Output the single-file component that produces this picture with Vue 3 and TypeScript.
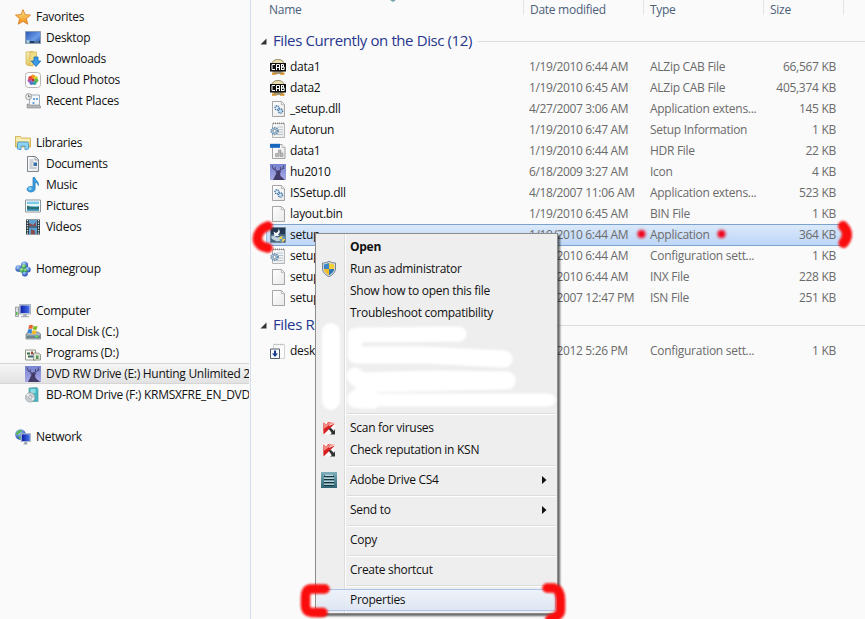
<script setup lang="ts">
interface NavItem { label: string; icon: string; child?: boolean; active?: boolean; gap?: boolean }
interface FileRow { name: string; icon: string; date: string; type: string; size: string; selected?: boolean }
interface MenuItem { label?: string; icon?: string; kind?: 'sep' | 'blank'; bold?: boolean; arrow?: boolean; hover?: boolean }

const nav: NavItem[] = [
  { label: 'Favorites', icon: 'star' },
  { label: 'Desktop', icon: 'desktop', child: true },
  { label: 'Downloads', icon: 'downloads', child: true },
  { label: 'iCloud Photos', icon: 'photos', child: true },
  { label: 'Recent Places', icon: 'recent', child: true },
  { label: 'Libraries', icon: 'libraries', gap: true },
  { label: 'Documents', icon: 'document', child: true },
  { label: 'Music', icon: 'music', child: true },
  { label: 'Pictures', icon: 'picture', child: true },
  { label: 'Videos', icon: 'video', child: true },
  { label: 'Homegroup', icon: 'homegroup', gap: true },
  { label: 'Computer', icon: 'computer', gap: true },
  { label: 'Local Disk (C:)', icon: 'disk', child: true },
  { label: 'Programs (D:)', icon: 'programs', child: true },
  { label: 'DVD RW Drive (E:) Hunting Unlimited 2', icon: 'deer', child: true, active: true },
  { label: 'BD-ROM Drive (F:) KRMSXFRE_EN_DVD', icon: 'bdrom', child: true },
  { label: 'Network', icon: 'network', gap: true },
]

const discFiles: FileRow[] = [
  { name: 'data1', icon: 'cab', date: '1/19/2010 6:44 AM', type: 'ALZip CAB File', size: '66,567 KB' },
  { name: 'data2', icon: 'cab', date: '1/19/2010 6:45 AM', type: 'ALZip CAB File', size: '405,374 KB' },
  { name: '_setup.dll', icon: 'dll', date: '4/27/2007 3:06 AM', type: 'Application extens...', size: '145 KB' },
  { name: 'Autorun', icon: 'config', date: '1/19/2010 6:47 AM', type: 'Setup Information', size: '1 KB' },
  { name: 'data1', icon: 'hdr', date: '1/19/2010 6:44 AM', type: 'HDR File', size: '22 KB' },
  { name: 'hu2010', icon: 'deer', date: '6/18/2009 3:27 AM', type: 'Icon', size: '4 KB' },
  { name: 'ISSetup.dll', icon: 'dll', date: '4/18/2007 11:06 AM', type: 'Application extens...', size: '523 KB' },
  { name: 'layout.bin', icon: 'page', date: '1/19/2010 6:45 AM', type: 'BIN File', size: '1 KB' },
  { name: 'setup', icon: 'setup', date: '1/19/2010 6:44 AM', type: 'Application', size: '364 KB', selected: true },
  { name: 'setup', icon: 'config', date: '1/19/2010 6:44 AM', type: 'Configuration sett...', size: '1 KB' },
  { name: 'setup', icon: 'page', date: '1/19/2010 6:44 AM', type: 'INX File', size: '228 KB' },
  { name: 'setup', icon: 'page', date: '4/18/2007 12:47 PM', type: 'ISN File', size: '251 KB' },
]
const burnFiles: FileRow[] = [
  { name: 'desktop', icon: 'queued', date: '6/20/2012 5:26 PM', type: 'Configuration sett...', size: '1 KB' },
]
const groups = [
  { title: 'Files Currently on the Disc (12)', rows: discFiles },
  { title: 'Files R', rows: burnFiles },
]

const menu: MenuItem[] = [
  { label: 'Open', bold: true },
  { label: 'Run as administrator', icon: 'shield' },
  { label: 'Show how to open this file' },
  { label: 'Troubleshoot compatibility' },
  { kind: 'blank' },
  { kind: 'sep' },
  { label: 'Scan for viruses', icon: 'kav' },
  { label: 'Check reputation in KSN', icon: 'kav' },
  { kind: 'sep' },
  { label: 'Adobe Drive CS4', icon: 'adobe', arrow: true },
  { kind: 'sep' },
  { label: 'Send to', arrow: true },
  { kind: 'sep' },
  { label: 'Copy' },
  { kind: 'sep' },
  { label: 'Create shortcut' },
  { kind: 'sep' },
  { label: 'Properties', hover: true },
]
</script>

<template>
  <div class="window">
    <svg class="defs" width="0" height="0">
      <defs>
        <linearGradient id="gStar" x1="0" y1="0" x2="0" y2="1"><stop offset="0" stop-color="#ffe98a" /><stop offset="1" stop-color="#f28a12" /></linearGradient>
        <linearGradient id="gBlue" x1="0" y1="0" x2="1" y2="1"><stop offset="0" stop-color="#2a55b4" /><stop offset=".6" stop-color="#6a9ce8" /><stop offset="1" stop-color="#2450a8" /></linearGradient>
        <linearGradient id="gScreen" x1="0" y1="0" x2="1" y2="0"><stop offset="0" stop-color="#0a1fa8" /><stop offset="1" stop-color="#4a74ea" /></linearGradient>
        <linearGradient id="gFold" x1="0" y1="0" x2="0" y2="1"><stop offset="0" stop-color="#f8eeb0" /><stop offset="1" stop-color="#e3c863" /></linearGradient>
        <linearGradient id="gPage" x1="0" y1="0" x2="1" y2="1"><stop offset="0" stop-color="#ffffff" /><stop offset="1" stop-color="#e9e9e9" /></linearGradient>
        <linearGradient id="gDeer" x1="0" y1="0" x2="0" y2="1"><stop offset="0" stop-color="#7684d2" /><stop offset="1" stop-color="#a9a8e4" /></linearGradient>
        <linearGradient id="gAdobe" x1="0" y1="0" x2="0" y2="1"><stop offset="0" stop-color="#7fb0bc" /><stop offset="1" stop-color="#2e6475" /></linearGradient>
        <radialGradient id="gBall" cx=".4" cy=".3" r=".7"><stop offset="0" stop-color="#a9d4ff" /><stop offset="1" stop-color="#1e44b0" /></radialGradient>
        <radialGradient id="gGreen" cx=".4" cy=".3" r=".7"><stop offset="0" stop-color="#b4f0a0" /><stop offset="1" stop-color="#1f8a36" /></radialGradient>
        <filter id="soft" x="-20%" y="-20%" width="140%" height="140%"><feGaussianBlur stdDeviation=".9" /></filter>
        <filter id="softer" x="-60%" y="-60%" width="220%" height="220%"><feGaussianBlur stdDeviation="1.400" /></filter>
      </defs>
      <symbol id="star" viewBox="0 0 16 16"><path d="M8 .6l2.100 5 5.400.5-4.100 3.600 1.300 5.500L8 12.300l-4.700 2.900 1.300-5.500L.5 6.100l5.400-.5z" fill="url(#gStar)" stroke="#d9822b" stroke-width=".9" /></symbol>
      <symbol id="desktop" viewBox="0 0 16 16"><path d="M.5 1.500h15v12H.5z" fill="url(#gBlue)" stroke="#8b9cb5" /><path d="M1 11h14v2H1z" fill="#1f3c60" /><circle cx="3" cy="11.700" r="1.800" fill="#a7cfd8" /><path d="M9 12h5" stroke="#7fa0c8" /></symbol>
      <symbol id="downloads" viewBox="0 0 16 16"><path d="M1 1l7-.5V15l-6-.8L1 13z" fill="url(#gFold)" stroke="#d0b050" stroke-width=".7" /><path d="M5 1h6.500v11L5 15z" fill="#f1dd84" stroke="#d0b050" stroke-width=".7" /><path d="M9 6h4v4h2.800L11 15.500 6.200 10H9z" fill="#3b9be6" stroke="#1569ad" stroke-width=".8" /></symbol>
      <symbol id="photos" viewBox="0 0 16 16"><rect x=".5" y=".5" width="15" height="15" rx="3" fill="#fff" stroke="#b9b4b4" /><circle cx="8" cy="4.600" r="2.200" fill="#f59a22" /><circle cx="10.700" cy="6" r="2.100" fill="#d5cf28" /><circle cx="11.300" cy="8.600" r="2.100" fill="#62b94a" /><circle cx="9.500" cy="11" r="2.100" fill="#38a59b" /><circle cx="6.500" cy="11" r="2.100" fill="#5474cd" /><circle cx="4.700" cy="8.600" r="2.100" fill="#a45ab6" /><circle cx="5.300" cy="6" r="2.100" fill="#e8453c" /><circle cx="8" cy="8" r="1.400" fill="#c4282e" /></symbol>
      <symbol id="recent" viewBox="0 0 16 16"><path d="M5 2h9.500v11H4z" fill="#f5f9fc" stroke="#8b98a4" stroke-width=".8" /><path d="M8 5h2v2H8zM11 5h2v2h-2zM7.500 9h2v2h-2z" fill="#6ea6d8" /><path d="M2 11l3.500 1h9l1 1.500V15H2z" fill="#b3b6b8" stroke="#888" stroke-width=".6" /><circle cx="3.600" cy="3.600" r="3" fill="#eee" stroke="#8a8a8a" stroke-width=".8" /><path d="M3.500 1.800v2h2" fill="none" stroke="#555" stroke-width=".8" /></symbol>
      <symbol id="libraries" viewBox="0 0 16 16"><path d="M.5 1.500h5l1 1.500h9V12H.5z" fill="url(#gFold)" stroke="#c9a944" stroke-width=".8" /><path d="M1 5h14" stroke="#fffbd8" /><path d="M2.500 14V8.500Q2.500 7 4 7h8q1.500 0 1.500 1.500V14l-3.500.8V11H6v3.800z" fill="#8fd2f3" stroke="#4193c4" stroke-width=".8" /></symbol>
      <symbol id="document" viewBox="0 0 16 16"><path d="M2.500.5h8l3 3v12h-11z" fill="url(#gPage)" stroke="#7d8790" /><path d="M10 .5v3.500h3.500" fill="#dfe5ea" stroke="#7d8790" stroke-width=".7" /><path d="M4.500 4h4M4.500 6h4M4.500 8h3M4.500 10h3M4.500 12h7" stroke="#8f9aa5" stroke-width=".8" /><path d="M8.500 6.500h3.500v3.500H8.500z" fill="#356fa8" /></symbol>
      <symbol id="music" viewBox="0 0 16 16"><path d="M8 .5h1.800c.3 3 4.200 3.500 3.600 8-.6-2-1.600-3-3.300-3.200v6.500c0 4-8 4.300-8 .5 0-2.300 3.300-3.500 5.900-2.200z" fill="#3a9ee0" stroke="#1e77b8" stroke-width=".7" /><circle cx="5" cy="11.600" r="1.700" fill="#8ccff5" /></symbol>
      <symbol id="picture" viewBox="0 0 16 16"><path d="M.5 2h15v12H.5z" fill="#fff" stroke="#8b959e" /><path d="M2 3.500h12v9H2z" fill="#7cc9ea" /><path d="M2 6h12v2H2z" fill="#e2f5f4" /><path d="M2 7.500q5 2.500 12 1v4H2z" fill="#28716f" /><path d="M2 11h12v1.500H2z" fill="#398dbd" /></symbol>
      <symbol id="video" viewBox="0 0 16 16"><path d="M1 .5h14v15H1z" fill="#27383f" /><path d="M4 1h8v6.500H4zM4 8.500h8V15H4z" fill="#5fa0cf" /><path d="M4 4l4 2 3-3v4H4zM6 10l4 2v3H6z" fill="#8c4b4d" /><path d="M2.500 1v14M13.500 1v14" stroke="#e9f1f4" stroke-width="1.300" stroke-dasharray="1.300 1.200" /></symbol>
      <symbol id="homegroup" viewBox="0 0 16 16"><circle cx="3.600" cy="7.500" r="3.200" fill="url(#gBall)" /><circle cx="9.500" cy="4" r="3.600" fill="url(#gBall)" /><circle cx="12.800" cy="8.600" r="2.900" fill="url(#gBall)" /><circle cx="9.800" cy="12.500" r="3" fill="url(#gBall)" /><circle cx="9" cy="5.500" r="2.300" fill="url(#gGreen)" /><circle cx="6.800" cy="9.300" r="2.400" fill="url(#gGreen)" /><circle cx="10.500" cy="9.500" r="1.700" fill="url(#gGreen)" /></symbol>
      <symbol id="computer" viewBox="0 0 16 16"><path d="M.5 4h3v9.500h-3z" fill="#d7dde0" stroke="#8c9498" stroke-width=".8" /><path d="M1 9h1.500v3H1z" fill="#5dbb4c" /><path d="M4.500 1.500h11v9.500h-11z" fill="#d7dde8" stroke="#9aa4b2" stroke-width=".8" /><path d="M5.500 2.500h9v7.500h-9z" fill="url(#gScreen)" /><path d="M8.500 11h3l.5 2h2v1.200H6V13h2z" fill="#a9b1b8" /></symbol>
      <symbol id="disk" viewBox="0 0 16 16"><path d="M1 10l2.500-2h10l2 2v5H1z" fill="#aab7bd" stroke="#67757b" stroke-width=".7" /><path d="M1.500 11.500h13.500V14H1.500z" fill="#6c858f" /><path d="M10 12.500h3" stroke="#55e050" stroke-width="1.500" /><path d="M4 1.500q2-1.500 4 0L7.300 5q-2-1.200-4 0z" fill="#e9622b" /><path d="M8.600 1.700q2 1.200 4 .2L11.800 5.500q-2 1-4-.2z" fill="#84bb2c" /><path d="M3 5.700q2-1.200 4.100 0L6.300 9.300q-2-1.200-4 0z" fill="#3b84d8" /><path d="M7.600 6q2 1.200 4 .2L10.900 9.700q-2 1-4-.2z" fill="#f5bd25" /></symbol>
      <symbol id="programs" viewBox="0 0 16 16"><path d="M.5 5h10v10H.5z" fill="#f7f8f4" stroke="#92988c" /><path d="M2 7.500h3v2H2zM3 10.500h3v2H3z" fill="#3c6b44" /><path d="M6 6.500h2v3H6z" fill="#a44438" /><path d="M6 10.500h2v2H6z" fill="#34589b" /><path d="M8.500 8h4.500l2.500 1.500V15h-7z" fill="#dfe5d6" stroke="#7c8776" stroke-width=".8" /><path d="M11 10.500h2.500V14H11z" fill="#5b9558" /></symbol>
      <symbol id="deer" viewBox="0 0 16 16"><path d="M0 0h16v16H0z" fill="url(#gDeer)" /><path d="M3 16l2-4 1.500-3L5 7.500l2-.3L8.500 6l1 1.200 2 .2L10 9l.5 3 4.500 4z" fill="#433b68" /><path d="M7.500 6.800C4 6 2.500 4.500 2 1.500M4 5l-1.200-.2M5.500 5.700L5 3M9 6.800c3-.8 4.500-2.500 4.500-5.300M12.500 4.500l2-.5M10.500 5.800L10.300 3" fill="none" stroke="#413968" stroke-width=".9" /></symbol>
      <symbol id="bdrom" viewBox="0 0 16 16"><path d="M4 1l8-.5 1 1.500v12.500H5L4 13z" fill="#42b8c4" stroke="#5c98a2" stroke-width=".7" /><path d="M5.500 2h5v4h-5z" fill="#8fdce2" /><circle cx="5.200" cy="10.300" r="4.800" fill="#c8ced2" stroke="#8f999e" stroke-width=".6" /><path d="M5.200 10.300L2 7M5.200 10.300l3.800 2" stroke="#f6f8fa" stroke-width="1.500" /><circle cx="5.200" cy="10.300" r="1.500" fill="#fff" stroke="#8b9397" stroke-width=".8" /></symbol>
      <symbol id="network" viewBox="0 0 16 16"><circle cx="5.500" cy="5.500" r="5.300" fill="url(#gBall)" /><path d="M2 2.500Q5 0 7 1.500 6 4 3.500 4.500 2 7 1 5.500zM3.500 7q3 0 2.500 3.500Q3 9.500 3.500 7z" fill="#58b84e" /><path d="M6 4.500h9.500v8H6z" fill="#dbe2ec" stroke="#94a0b0" stroke-width=".7" /><path d="M6.800 5.300h8V12h-8z" fill="url(#gScreen)" /><path d="M9.500 13h2.500l.5 2.500h-4z" fill="#9aa7b4" /></symbol>
      <symbol id="cab" viewBox="0 0 16 16"><circle cx="8" cy="7.500" r="7.200" fill="#e9dcae" stroke="#847a59" stroke-width=".8" /><path d="M2 13.500h4.500v2.300H2zM10 13.500h4.500v2.300H10z" fill="#d99223" /><path d="M4 12h8v2.500H4z" fill="#a39573" /><path d="M0 4h16v8.500H0z" fill="#111" /><path d="M5 5.500H2v5h3M6.500 11V5.500h3V11M6.500 8.500h3M11.500 5v6M11 5.500h2.500V8H11M11 8h3.200v2.500H11" fill="none" stroke="#fff" stroke-width="1" /></symbol>
      <symbol id="page" viewBox="0 0 16 16"><path d="M2.500.5h9l3 3v12h-12z" fill="url(#gPage)" stroke="#9c9c9c" stroke-width=".9" /><path d="M11.300.7v3h3" fill="#f4f4f4" stroke="#ababab" stroke-width=".8" /></symbol>
      <symbol id="dll" viewBox="0 0 16 16"><use href="#page" /><circle cx="7" cy="6.800" r="2.100" fill="#d8e9f8" stroke="#3d6e9e" stroke-width="1.300" stroke-dasharray="1.200 .7" /><circle cx="10.500" cy="10" r="2.100" fill="#c6def4" stroke="#3d6e9e" stroke-width="1.300" stroke-dasharray="1.200 .7" /></symbol>
      <symbol id="config" viewBox="0 0 16 16"><path d="M2.500 1.500h12v14h-12z" fill="url(#gPage)" stroke="#a6a6a6" stroke-width=".8" /><path d="M3 1.300h11" stroke="#888" stroke-width="1.800" stroke-dasharray="1 1" /><path d="M7 5h6M7 7.500h6M7 10h6M7 12.500h6" stroke="#a9bac6" stroke-width=".8" /><circle cx="4.600" cy="9" r="3.300" fill="#cfe0ee" stroke="#6589a6" stroke-width="1.900" stroke-dasharray="1.300 .8" /><circle cx="4.600" cy="9" r="1.600" fill="#fff" stroke="#587b98" stroke-width=".8" /></symbol>
      <symbol id="hdr" viewBox="0 0 16 16"><path d="M2.500 1.500h9.500l3 3v11H2.500z" fill="url(#gPage)" stroke="#999" stroke-width=".9" /><path d="M12 1.500v3h3" fill="#fff" stroke="#aaa" stroke-width=".8" /><path d="M0 .8h10v4H0z" fill="#1768bd" /><path d="M5.500 10.500h3.500v3H5.500zM10 10h3v3.500h-3zM8.500 7h2.500v2.500H8.500z" fill="#b8b8b8" stroke="#868686" stroke-width=".5" /></symbol>
      <symbol id="setup" viewBox="0 0 16 16"><path d="M.5.500h15v15H.500z" fill="#46657f" stroke="#71879a" /><path d="M1 1h14v6H1z" fill="#233750" /><path d="M1 9.500l3-1 3 2 5-1 2 1-2 3-5 1-5-2.500z" fill="#bfd2dd" /><path d="M3.500 4.500l1 4.500h5L7.800 7.700Q11.500 5.500 8.500 1.500 9 4.500 6 6z" fill="#f4fafb" /><path d="M9.500 10l2.700-1.300L15 10v2.500q-.8 2-2.800 3-2-1-2.700-3z" fill="#f3d04e" /><path d="M12.200 8.700L15 10v2h-2.800zM9.500 12h2.700v3.500Q10 14.500 9.500 12z" fill="#5b95c0" /></symbol>
      <symbol id="queued" viewBox="0 0 16 16"><path d="M3.500 1.500h11v14h-11z" fill="#fbfbfb" stroke="#c9c9c9" stroke-width=".8" /><path d="M4 1.500h10" stroke="#bbb" stroke-width="1.500" stroke-dasharray="1 1" /><path d="M.5 6h9v9.500h-9z" fill="#f8fbff" stroke="#555f6b" /><path d="M4 7.500h2v3h2L5 14 2 10.500h2z" fill="#183a90" /></symbol>
      <symbol id="shield" viewBox="0 0 16 16"><path d="M8 .3q3 2 6.500 1.700V8q-.5 5-6.500 7.700Q2 13 1.500 8V2Q5 2.300 8 .3z" fill="#d9dfe4" stroke="#6d7a88" stroke-width=".9" /><path d="M8 2v6H2.800V3.500z" fill="#3a86c8" /><path d="M8 2l5.200 1.500V8H8z" fill="#f6cf35" /><path d="M2.800 8H8v6.300Q3.300 12 2.800 8z" fill="#f1bd22" /><path d="M13.200 8H8v6.300q4.700-2.300 5.200-6.300z" fill="#3078ba" /></symbol>
      <symbol id="kav" viewBox="0 0 16 16"><path d="M2 2h12v12.500H2z" fill="#fcf8f8" /><path d="M2 2.500l3.500 2L7 2h3L7.800 6 14 3.500 2.500 14.500z" fill="#d81e1e" /><path d="M2 2.500l3.500 2L8 2h2L7 6 2.500 9zM10 2.500h4L9.500 5z" fill="#f08a83" /><path d="M7.500 8.500l2.500-.5 3.200 3.200V9.500h.8v5H9l1.800-1.300z" fill="#303030" /></symbol>
      <symbol id="adobe" viewBox="0 0 16 16"><path d="M0 0h16v16H0z" fill="url(#gAdobe)" /><path d="M3 4.300h10M3 7.300h10M3 10.300h10M3 13.300h10" stroke="#173640" stroke-width="1.200" /><path d="M4 3.200h8M3 6.200h10M3 9.200h10M3 12.200h10" stroke="#dff0f2" stroke-width="1.100" /></symbol>
    </svg>

    <nav class="sidebar">
      <div v-for="n in nav" :key="n.label" class="nav-item" :class="{ child: n.child, active: n.active, gap: n.gap }">
        <svg class="icon"><use :href="'#' + n.icon" /></svg>
        <span>{{ n.label }}</span>
      </div>
    </nav>

    <main class="files">
      <header class="columns">
        <span class="c-name">Name</span><span>Date modified</span><span>Type</span><span>Size</span>
        <i class="sort"></i>
      </header>
      <section v-for="g in groups" :key="g.title" class="group">
        <h2><svg class="tri" viewBox="0 0 7 7"><path d="M6.500 .5v6h-6z" /></svg><span>{{ g.title }}</span><i></i></h2>
        <div v-for="(f, i) in g.rows" :key="i" class="row" :class="{ selected: f.selected }">
          <svg class="icon"><use :href="'#' + f.icon" /></svg>
          <span class="name">{{ f.name }}</span>
          <span class="date">{{ f.date }}</span>
          <span class="type">{{ f.type }}</span>
          <span class="size">{{ f.size }}</span>
        </div>
      </section>
    </main>

    <div class="menu">
      <template v-for="(m, i) in menu" :key="i">
        <div v-if="m.kind === 'sep'" class="sep"></div>
        <div v-else-if="m.kind === 'blank'" class="blank"></div>
        <div v-else class="item" :class="{ bold: m.bold, hover: m.hover }">
          <span class="slot"><svg v-if="m.icon" class="icon"><use :href="'#' + m.icon" /></svg></span>
          <span class="label">{{ m.label }}</span>
          <svg v-if="m.arrow" class="arrow" viewBox="0 0 5 8"><path d="M0 0l4.500 4L0 8z" /></svg>
        </div>
      </template>
    </div>

    <svg class="marks" viewBox="0 0 865 619">
      <g fill="none" stroke="#fff" stroke-linecap="round" stroke-linejoin="round" filter="url(#soft)">
        <path d="M331 332V401" stroke-width="18" />
        <path d="M357 335L459 334" stroke-width="15" />
        <path d="M355 335V355" stroke-width="14" />
        <path d="M356 355L425 355L504 359" stroke-width="17" />
        <path d="M355 376L361 381L430 379L507 380" stroke-width="17" />
        <path d="M362 384L507 381" stroke-width="17" />
        <path d="M356 399L372 400" stroke-width="18" />
        <path d="M360 400H549" stroke-width="13" />
      </g>
      <g fill="none" stroke="#fa0808" stroke-linecap="round" stroke-linejoin="round" filter="url(#soft)">
        <path d="M268 226C261 228 257 234 257.500 240C258.500 245 262 247 268 248" stroke-width="9.500" />
        <path d="M843 226C848 231 848.500 237 843.500 243" stroke-width="10" />
        <path d="M325 589H310Q305.500 590 305.500 597V606Q306 612.500 312 612.500H323" stroke-width="9.500" />
        <path d="M547 588H554Q560.500 590 560.500 600V610Q560.500 616 550 619" stroke-width="9.500" />
      </g>
      <g fill="#f00018" filter="url(#softer)"><circle cx="641.500" cy="234" r="4" /><circle cx="721.500" cy="234" r="4" /></g>
    </svg>
  </div>
</template>

<style>
body { background: #fafafa; }
</style>

<style scoped>
.window { position: relative; display: flex; width: 865px; height: 619px; overflow: hidden; background: #fafafa; color: #111; font: 12px/21px "Open Sans", "Noto Sans", sans-serif; letter-spacing: -0.28px; white-space: nowrap; }
.defs { position: absolute; }
.icon { width: 16px; height: 16px; flex: none; }
.sidebar { box-sizing: border-box; width: 251px; padding-top: 6px; flex: none; border-right: 1px solid #d3dfec; }
.nav-item { display: flex; align-items: center; gap: 5px; height: 21px; width: 234px; padding-left: 15px; overflow: hidden; }
.nav-item.child { padding-left: 25px; width: 224px; }
.nav-item.gap { margin-top: 21px; }
.nav-item.active { box-sizing: border-box; width: 249px; border-top: 1px solid #d6d6d6; border-bottom: 1px solid #d6d6d6; background: linear-gradient(#f6f6f6, #e2e2e2); }
.files { flex: 1; min-width: 0; }
.columns { position: relative; display: grid; grid-template-columns: 273px 120px 120px 80px; height: 15px; line-height: 20px; color: #4c607a; }
.columns span { padding-left: 6px; border-right: 1px solid #e1e5ea; height: 15px; }
.columns .c-name { padding-left: 18px; }
.sort { position: absolute; left: 139px; top: 0; width: 6px; height: 2px; background: #74a6b4; clip-path: polygon(0 0, 100% 0, 50% 100%); }
.group h2 { display: flex; align-items: center; gap: 6px; margin: 16px 0 5px 9px; height: 20px; font-size: 15px; font-weight: 400; line-height: 20px; color: #26378f; letter-spacing: -0.4px; }
.group h2 span { padding-bottom: 2px; }
.group + .group h2 { margin-top: 7px; }
.group h2 i { flex: 1; height: 1px; background: #dadde0; }
.tri { width: 7px; height: 7px; fill: #333; }
.row { display: grid; grid-template-columns: 16px 240px 121px 109px 80px; align-items: center; box-sizing: border-box; height: 21px; margin-left: 15px; width: 577px; padding-left: 4px; color: #6b6b6b; }
.row .name { padding-left: 4px; color: #111; }
.row .date { margin-left: 3px; letter-spacing: -0.36px; }
.row .type { margin-left: 3px; }
.row .size { text-align: right; }
.row.selected { height: 22px; padding-bottom: 1px; margin-bottom: -1px; box-shadow: inset 0 1px #7da2ce, inset 0 -1px #7da2ce, inset 1px 0 #9dbde2; background: linear-gradient(#dceafb, #bcd5f7); }
.menu { position: absolute; left: 315px; top: 233px; box-sizing: border-box; width: 243px; height: 381px; padding: 2px 1px; border: 1px solid #8c8c8c; background: linear-gradient(90deg, transparent 28px, #dcdcdc 28px, #dcdcdc 29px, #fff 29px, #fff 30px, transparent 30px) #eeeeee; box-shadow: 2px 2px 2px rgba(0, 0, 0, .6); }
.item { display: flex; align-items: center; height: 22px; }
.item .slot { display: flex; width: 33px; padding-left: 4px; box-sizing: border-box; flex: none; }
.item .label { flex: 1; line-height: 20px; }
.item.bold { font-weight: 700; }
.item.hover { box-sizing: border-box; border: 1px solid #aec4e8; border-left: 0; border-radius: 2px; background: linear-gradient(rgba(238, 242, 250, .9), rgba(222, 230, 243, .9)); }
.arrow { width: 5px; height: 8px; margin-right: 9px; fill: #111; }
.blank { height: 85px; }
.sep { height: 8px; background: linear-gradient(transparent 4px, #dcdcdc 4px, #dcdcdc 5px, #fff 5px, #fff 6px, transparent 6px); margin-left: 30px; }
.marks { position: absolute; inset: 0; width: 865px; height: 619px; pointer-events: none; }
</style>
